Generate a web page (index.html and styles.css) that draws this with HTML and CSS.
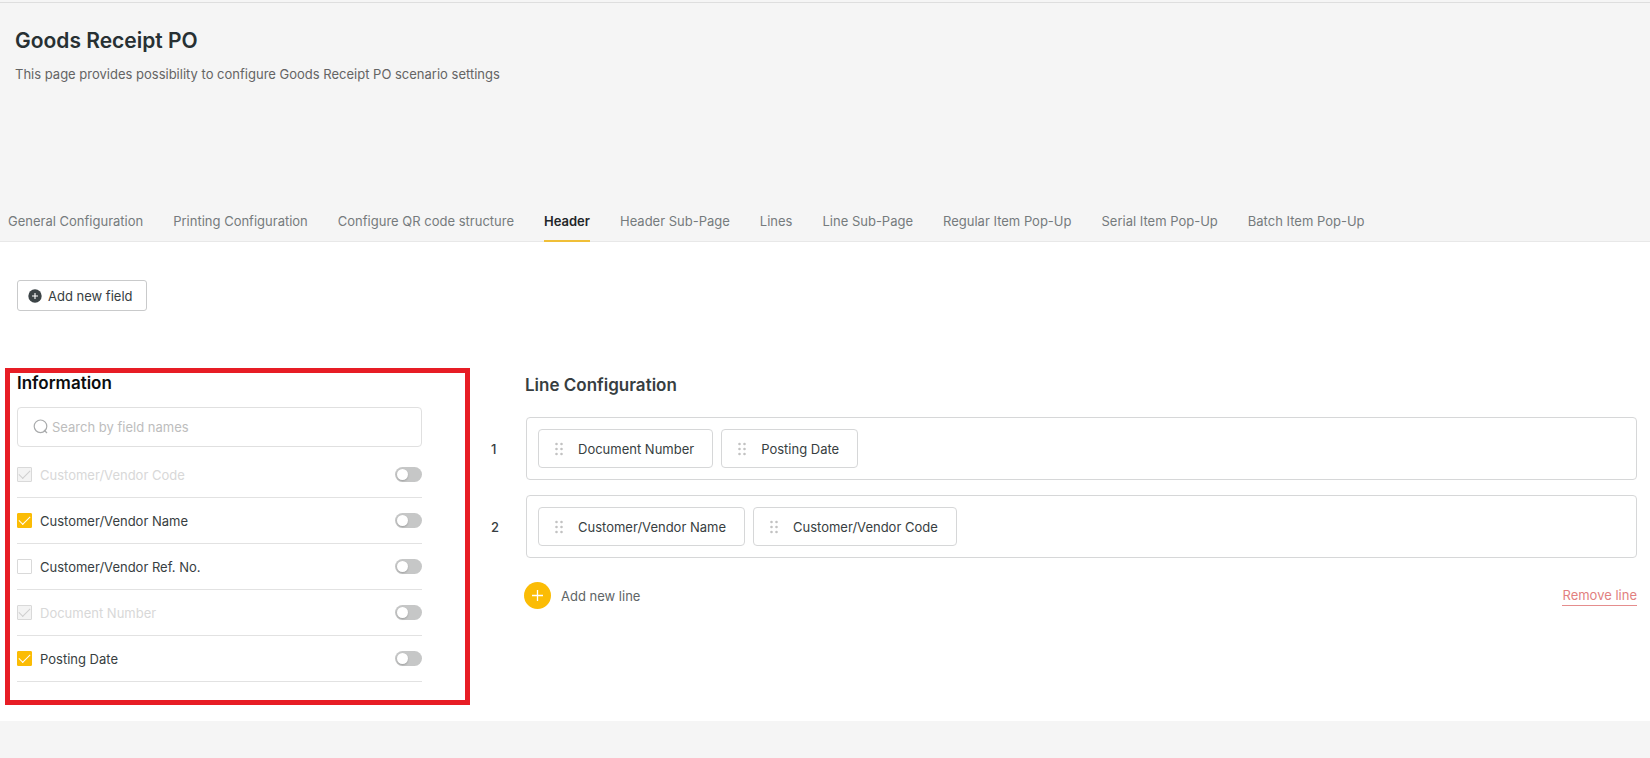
FILE: index.html
```html
<!DOCTYPE html>
<html lang="en">
<head>
<meta charset="utf-8">
<title>Goods Receipt PO</title>
<link rel="stylesheet" href="styles.css">
</head>
<body>
<header class="page-header">
  <h1 class="page-title">Goods Receipt PO</h1>
  <p class="page-subtitle">This page provides possibility to configure Goods Receipt PO scenario settings</p>
</header>
<nav class="tabs">
  <a class="tab" href="#">General Configuration</a>
  <a class="tab" href="#">Printing Configuration</a>
  <a class="tab" href="#">Configure QR code structure</a>
  <a class="tab tab-active" href="#">Header</a>
  <a class="tab" href="#">Header Sub-Page</a>
  <a class="tab" href="#">Lines</a>
  <a class="tab" href="#">Line Sub-Page</a>
  <a class="tab" href="#">Regular Item Pop-Up</a>
  <a class="tab" href="#">Serial Item Pop-Up</a>
  <a class="tab" href="#">Batch Item Pop-Up</a>
</nav>
<main class="content">
  <button class="add-field" type="button">
    <svg width="14" height="14" viewBox="0 0 14 14"><circle cx="7" cy="7" r="6.7" fill="#3c4447"/><path d="M7 4v6M4 7h6" stroke="#fff" stroke-width="1.1"/></svg>
    Add new field
  </button>
  <div class="columns">
    <section class="info">
      <h2 class="info-title">Information</h2>
      <div class="search">
        <svg width="16" height="16" viewBox="0 0 16 16" fill="none" stroke="#a9abac" stroke-width="1.2"><circle cx="7.5" cy="7.3" r="6.3"/><path d="M11 11l3 3" /></svg>
        <input class="search-input" type="text" placeholder="Search by field names" aria-label="Search by field names">
      </div>
      <ul class="fields">
        <li class="field"><label class="field-label"><input class="check" type="checkbox" checked disabled>Customer/Vendor Code</label><input class="switch" type="checkbox" aria-label="Customer/Vendor Code switch"></li>
        <li class="field"><label class="field-label"><input class="check" type="checkbox" checked>Customer/Vendor Name</label><input class="switch" type="checkbox" aria-label="Customer/Vendor Name switch"></li>
        <li class="field"><label class="field-label"><input class="check" type="checkbox">Customer/Vendor Ref. No.</label><input class="switch" type="checkbox" aria-label="Customer/Vendor Ref. No. switch"></li>
        <li class="field"><label class="field-label"><input class="check" type="checkbox" checked disabled>Document Number</label><input class="switch" type="checkbox" aria-label="Document Number switch"></li>
        <li class="field"><label class="field-label"><input class="check" type="checkbox" checked>Posting Date</label><input class="switch" type="checkbox" aria-label="Posting Date switch"></li>
      </ul>
    </section>
    <section class="lines">
      <h2 class="lines-title">Line Configuration</h2>
      <div class="line">
        <span class="line-number">1</span>
        <div class="line-box">
          <div class="chip"><svg class="grip" width="8" height="14" viewBox="0 0 8 14"><path d="M1.5 2h.01M6.5 2h.01M1.5 7h.01M6.5 7h.01M1.5 12h.01M6.5 12h.01"/></svg>Document Number</div>
          <div class="chip"><svg class="grip" width="8" height="14" viewBox="0 0 8 14"><path d="M1.5 2h.01M6.5 2h.01M1.5 7h.01M6.5 7h.01M1.5 12h.01M6.5 12h.01"/></svg>Posting Date</div>
        </div>
      </div>
      <div class="line">
        <span class="line-number">2</span>
        <div class="line-box">
          <div class="chip"><svg class="grip" width="8" height="14" viewBox="0 0 8 14"><path d="M1.5 2h.01M6.5 2h.01M1.5 7h.01M6.5 7h.01M1.5 12h.01M6.5 12h.01"/></svg>Customer/Vendor Name</div>
          <div class="chip"><svg class="grip" width="8" height="14" viewBox="0 0 8 14"><path d="M1.5 2h.01M6.5 2h.01M1.5 7h.01M6.5 7h.01M1.5 12h.01M6.5 12h.01"/></svg>Customer/Vendor Code</div>
        </div>
      </div>
      <div class="line-actions">
        <button class="add-line" type="button">
          <svg width="27" height="27" viewBox="0 0 27 27"><circle cx="13.5" cy="13.5" r="13.5" fill="#fbbc05"/><path d="M13.5 8v11M8 13.5h11" stroke="#fff" stroke-width="1.3"/></svg>
          Add new line
        </button>
        <button class="remove-line" type="button">Remove line</button>
      </div>
    </section>
  </div>
</main>
</body>
</html>
```
FILE: styles.css
```css
* {
  box-sizing: border-box;
}

body {
  margin: 0;
  padding-top: 2px;
  background: #f5f5f5;
  color: #373e41;
  font: 13px/20px Inter, "Liberation Sans", sans-serif;
}

button {
  padding: 0;
  border: 0;
  background: none;
  color: inherit;
  font: inherit;
  cursor: pointer;
}

svg {
  flex: none;
}

.page-header {
  padding: 24px 15px 119px;
  border-top: 1px solid #dedede;
}

.page-title {
  margin: 0;
  color: #273033;
  font-size: 21px;
  font-weight: 600;
  line-height: 28px;
}

.page-subtitle {
  margin: 9px 0 0;
  color: #646464;
}

.tabs {
  display: flex;
  gap: 30px;
  padding: 8px 8px 0;
  border-bottom: 1px solid #e8e8e8;
}

.tab {
  margin-bottom: -1px;
  padding-bottom: 9px;
  border-bottom: 2px solid transparent;
  color: #757b7d;
  text-decoration: none;
  white-space: nowrap;
}

.tab-active {
  border-color: #f0bf38;
  color: #1f2629;
  font-weight: 600;
}

.content {
  padding: 38px 13px 16px 5px;
  background: #fff;
}

.add-field {
  display: flex;
  align-items: center;
  gap: 6px;
  height: 31px;
  margin-left: 12px;
  padding: 0 13px 0 10px;
  border: 1px solid #c9cacb;
  border-radius: 3px;
}

.columns {
  display: flex;
  align-items: flex-start;
  gap: 21px;
  margin-top: 57px;
}

.info {
  flex: none;
  width: 465px;
  padding: 0 43px 18px 7px;
  border: 5px solid #e71d25;
}

.info-title,
.lines-title {
  margin: 0;
  font-size: 17px;
  font-weight: 600;
  line-height: 20px;
}

.info-title {
  color: #0b0d0e;
}

.search {
  display: flex;
  align-items: center;
  gap: 3px;
  height: 40px;
  margin-top: 14px;
  padding: 0 15px;
  border: 1px solid #e0e0e0;
  border-radius: 4px;
}

.search-input {
  flex: 1;
  min-width: 0;
  padding: 0;
  border: 0;
  outline: 0;
  background: none;
  color: inherit;
  font: inherit;
}

.search-input::placeholder {
  color: #bdbdbd;
}

.fields {
  margin: 5px 0 0;
  padding: 0;
  list-style: none;
}

.field {
  display: flex;
  align-items: center;
  justify-content: space-between;
  height: 46px;
  border-bottom: 1px solid #e2e2e2;
}

.field-label {
  display: flex;
  align-items: center;
  gap: 8px;
}

.field-label:has(:disabled) {
  color: #d8d8d8;
}

.check {
  appearance: none;
  display: grid;
  place-items: center;
  width: 15px;
  height: 15px;
  margin: 0;
  border: 1px solid #d9d9d9;
  border-radius: 1px;
}

.check:checked {
  border-color: #fbbc05;
  background: #fbbc05;
}

.check:checked:disabled {
  border-color: #d9d9d9;
  background: #f3f3f3;
}

.check:checked::after {
  content: "";
  width: 10px;
  height: 5px;
  margin-bottom: 3px;
  border: solid #fff;
  border-width: 0 0 1px 1px;
  transform: rotate(-45deg);
}

.check:checked:disabled::after {
  border-color: #cfcfcf;
}

.switch {
  appearance: none;
  width: 27px;
  height: 15px;
  margin: 0;
  padding: 2px;
  border-radius: 8px;
  background: #c6c7c7;
}

.switch::after {
  content: "";
  display: block;
  width: 11px;
  height: 11px;
  border-radius: 50%;
  background: #fff;
  box-shadow: 0 1px 2px #0003;
}

.switch:checked::after {
  margin-left: auto;
}

.lines {
  flex: 1;
  min-width: 0;
  padding-top: 7px;
}

.lines-title {
  margin: 0 0 22px 34px;
}

.line {
  display: flex;
  align-items: center;
  margin-bottom: 15px;
}

.line-number {
  width: 35px;
  font-weight: 500;
}

.line-box {
  display: flex;
  flex: 1;
  flex-wrap: wrap;
  gap: 8px;
  padding: 11px;
  border: 1px solid #d6d7d8;
  border-radius: 4px;
}

.chip {
  display: flex;
  align-items: center;
  gap: 15px;
  height: 39px;
  padding: 0 18px 0 16px;
  border: 1px solid #d6d7d8;
  border-radius: 4px;
}

.grip {
  fill: none;
  stroke: #c2c2c2;
  stroke-width: 2.6;
  stroke-linecap: round;
}

.line-actions {
  display: flex;
  align-items: center;
  justify-content: space-between;
  margin: 24px 0 0 33px;
}

.add-line {
  display: flex;
  align-items: center;
  gap: 10px;
  color: #606567;
}

.remove-line {
  border-bottom: 1px solid #e58d8d;
  color: #e27f7f;
}
```
